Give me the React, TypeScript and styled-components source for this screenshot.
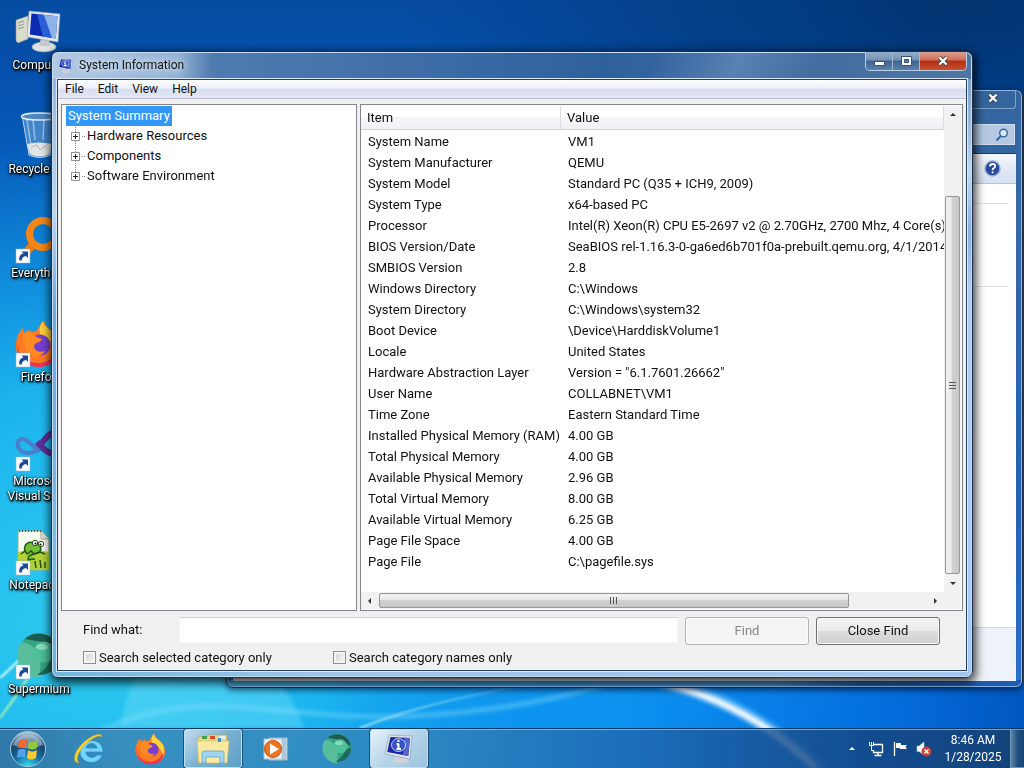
import React from "react";
import styled, { createGlobalStyle, css } from "styled-components";

const GlobalStyle = createGlobalStyle`
  * { box-sizing: border-box; }
  body {
    margin: 0;
    font-family: Roboto, "Open Sans", sans-serif;
    font-size: 13px;
    line-height: 16px;
    color: #111;
    overflow: hidden;
  }
  button, input { font: inherit; color: inherit; }
`;

/* ---------- desktop ---------- */

const Desktop = styled.div`
  position: relative;
  display: flex;
  flex-direction: column;
  min-height: 100vh;
  overflow: hidden;
  isolation: isolate;
`;

const WallpaperArt = styled.svg`
  position: absolute;
  inset: 0;
  width: 100%;
  height: 100%;
  z-index: -1;
`;

const Workspace = styled.main`
  position: relative;
  flex: 1;
`;

const IconColumn = styled.nav`
  display: flex;
  flex-direction: column;
  width: 78px;
  padding-top: 8px;
`;

const DesktopIcon = styled.a`
  display: flex;
  flex-direction: column;
  align-items: center;
  gap: 2px;
  height: 104px;
  color: #fff;
  text-align: center;
  text-decoration: none;
  font-size: 12px;
  line-height: 15px;
  text-shadow: 0 1px 2px #000, 0 0 3px #000, 1px 1px 1px #000, 1px 2px 3px #000;
  &:last-child {
    height: auto;
  }
`;

const IconLabel = styled.span`
  width: 78px;
  white-space: nowrap;
`;

/* ---------- windows ---------- */

const frame = css`
  position: absolute;
  display: flex;
  flex-direction: column;
  border-radius: 7px;
  border: 1px solid #1c2f47;
`;

const ExplorerWindow = styled.section`
  ${frame}
  top: 89px;
  left: 226px;
  right: 1px;
  bottom: 40px;
  padding: 0 6px 6px;
  background:
    linear-gradient(90deg, #3b9ccb, #2f86cb 40%, #3f83b6 68%, #1d57a5 80%, #1f5cb4) 0 100% / 100% 7px no-repeat,
    linear-gradient(#34659f 0, #3568a4 130px, #2262b4 400px, #2c6fc8);
  box-shadow: inset 0 0 0 1px #8cb5e2, 0 2px 6px rgba(0, 10, 40, 0.6);
`;

const ExplorerTitle = styled.header`
  display: flex;
  justify-content: flex-end;
  height: 34px;
`;

const GhostClose = styled.button`
  width: 46px;
  height: 19px;
  padding: 0;
  border: 1px solid #7fa3cc;
  border-top: 0;
  border-radius: 0 0 4px 4px;
  background: transparent;
`;

const ExplorerAddress = styled.div`
  display: flex;
  justify-content: flex-end;
  height: 29px;
  padding-right: 1px;
`;

const ExplorerSearch = styled.div`
  display: flex;
  align-items: center;
  justify-content: flex-end;
  width: 200px;
  height: 21px;
  padding-right: 5px;
  background: #b5cae2;
  border: 1px solid #cfdff0;
`;

const ExplorerTools = styled.div`
  display: flex;
  align-items: center;
  justify-content: flex-end;
  height: 31px;
  padding-right: 15px;
  background: linear-gradient(#f5f9fd, #e0e9f5 50%, #d5e1f2);
  border-top: 1px solid #1d3c63;
  border-bottom: 1px solid #b4c4dc;
`;

const ExplorerBody = styled.div`
  flex: 1;
  background: #fff;
`;

const ExplorerGroup = styled.div<{ $height: number }>`
  height: ${(p) => p.$height}px;
  margin-right: 8px;
  border-bottom: 1px solid #dfe3e8;
`;

const ExplorerDetails = styled.div`
  height: 54px;
  background: #edf3f9;
  border-top: 1px solid #ccd8e6;
`;

const MainWindow = styled.section`
  ${frame}
  top: 51px;
  left: 51px;
  right: 51px;
  bottom: 50px;
  padding: 0 5px 6px;
  background:
    linear-gradient(90deg, rgba(188, 209, 234, 0.9) 0, rgba(160, 188, 220, 0.85) 125px, rgba(70, 120, 180, 0) 160px) 0 0 / 100% 27px no-repeat,
    linear-gradient(115deg, transparent 65%, rgba(180, 205, 235, 0.25) 74%, transparent 83%) 0 0 / 100% 27px no-repeat,
    linear-gradient(90deg, #5f86b2, #4d7aaf 20%, #2f609e 60%, #5076a2) 0 0 / 100% 27px no-repeat,
    linear-gradient(90deg, #72b6dc, #9fc4e8 30%, #a4c6f0) 0 100% / 100% 7px no-repeat,
    linear-gradient(#8fb1d6, #bcd5ef 160px, #73a7de 260px, #78bee4 500px, #68b4d8) 0 0 / 50% 100% no-repeat,
    linear-gradient(#6b8eb8, #c0d6ee 120px, #8aaedc 180px, #b5cbf0 240px, #a6c8f5) 100% 0 / 50% 100% no-repeat;
  box-shadow: inset 0 0 0 1px #c5dcf2, 1px 3px 10px 2px rgba(0, 0, 0, 0.75);
`;

const TitleBar = styled.header`
  display: flex;
  align-items: flex-start;
  height: 27px;
`;

const Title = styled.h1`
  flex: 1;
  display: flex;
  align-items: center;
  gap: 5px;
  margin: 0;
  height: 26px;
  font-size: 12px;
  font-weight: 400;
  text-shadow: 0 0 6px #dce8f5, 0 0 10px #dce8f5;
`;

const Caption = styled.div`
  display: flex;
  height: 19px;
  border: 1px solid #b9cde4;
  border-top: 0;
  border-radius: 0 0 5px 5px;
  overflow: hidden;
`;

const CaptionButton = styled.button<{ $close?: boolean }>`
  display: grid;
  place-items: center;
  width: ${(p) => (p.$close ? 46 : 27)}px;
  padding: 0;
  border: 0;
  border-right: ${(p) => (p.$close ? 0 : 1)}px solid #a3bbd6;
  background: ${(p) =>
    p.$close
      ? "linear-gradient(#dba092, #cf6d58 45%, #b32f14 50%, #c9512d)"
      : "linear-gradient(#93adca, #7492b7 45%, #3e638f 50%, #5b82ae)"};
`;

const Client = styled.div`
  flex: 1;
  display: flex;
  flex-direction: column;
  min-height: 0;
  background: #f0f0f0;
  border: 1px solid #27425f;
  box-shadow: 0 0 0 1px #d7e8f8;
`;

const MenuBar = styled.nav`
  display: flex;
  gap: 2px;
  height: 19px;
  padding-left: 1px;
  background: linear-gradient(#fdfeff, #edf1fa 45%, #d9deef 50%, #e3e6f4);
  border-bottom: 1px solid #b8bccd;
`;

const MenuItem = styled.button`
  padding: 0 6px;
  border: 0;
  background: none;
  font-size: 12px;
  line-height: 18px;
`;

const Panes = styled.div`
  flex: 1;
  display: grid;
  grid-template-columns: 296px minmax(0, 1fr);
  gap: 3px;
  min-height: 0;
  padding: 5px 3px 0;
`;

const pane = css`
  background: #fff;
  border: 1px solid #82858b;
`;

const Tree = styled.ul`
  ${pane}
  margin: 0;
  padding: 1px 4px;
  list-style: none;
`;

const Branches = styled.ul`
  margin: 0 0 0 9px;
  padding: 0;
  list-style: none;
  background: linear-gradient(#fff 50%, #888 50%) 0 0 / 1px 2px repeat-y;
  height: 50px;
`;

const Branch = styled.li`
  display: flex;
  align-items: center;
  height: 20px;
  gap: 2px;
  margin-left: -4px;
`;

const Selected = styled.span`
  display: inline-block;
  padding: 0 2px;
  line-height: 20px;
  color: #fff;
  background: #3397f8;
`;

const Expander = styled.button`
  width: 9px;
  height: 9px;
  padding: 0;
  border: 0;
  background: none;
  display: flex;
`;

const Dots = styled.span`
  width: 3px;
  border-top: 1px dotted #888;
`;

const ListPane = styled.div`
  ${pane}
  display: grid;
  grid-template: minmax(0, 1fr) 17px / minmax(0, 1fr) 17px;
  padding: 1px 1px 1px 0;
`;

const TableClip = styled.div`
  overflow: hidden;
`;

const Table = styled.table`
  width: 100%;
  table-layout: fixed;
  border-collapse: separate;
  border-spacing: 0;
  white-space: nowrap;
`;

const HeadCell = styled.th<{ $width?: number }>`
  width: ${(p) => (p.$width ? `${p.$width}px` : "auto")};
  height: 24px;
  padding: 0 0 0 6px;
  text-align: left;
  font-weight: 400;
  background: linear-gradient(#fff 45%, #f5f6f8 50%, #f1f2f4);
  border-bottom: 1px solid #d5d5d5;
  border-right: 1px solid #dcdfe3;
`;

const HeadSpace = styled.td`
  height: 1px;
  padding: 0;
`;

const Cell = styled.td`
  height: 21px;
  padding: 0 0 0 7px;
  line-height: 20px;
`;

const ScrollTrack = styled.div<{ $vertical?: boolean }>`
  display: flex;
  flex-direction: ${(p) => (p.$vertical ? "column" : "row")};
  background: #f1f1f1;
`;

const ScrollArrow = styled.button`
  display: grid;
  place-items: center;
  flex: 0 0 18px;
  padding: 0;
  border: 0;
  background: none;
`;

const ScrollSpace = styled.div<{ $grow: number }>`
  flex: ${(p) => p.$grow} 1 0;
`;

const Thumb = styled.div<{ $grow: number; $vertical?: boolean }>`
  flex: ${(p) => p.$grow} 1 0;
  display: grid;
  place-items: center;
  margin: ${(p) => (p.$vertical ? "0 1px" : "1px 0")};
  border: 1px solid #969696;
  border-radius: 2px;
  background: linear-gradient(
    ${(p) => (p.$vertical ? "90deg" : "180deg")},
    #f4f4f4, #e6e6e6 45%, #d0d0d0 50%, #c8c8c8
  );
`;

const FindBar = styled.form`
  display: grid;
  grid-template-columns: 96px minmax(0, 1fr) 124px 124px;
  column-gap: 7px;
  padding: 6px 26px 2px 25px;
`;

const FindLabel = styled.label`
  line-height: 26px;
`;

const FindInput = styled.input`
  height: 26px;
  margin-left: -7px;
  padding: 0 6px;
  border: 1px solid #f5f5f5;
  border-top-color: #d2d4d8;
  background: #fff;
`;

const PushButton = styled.button`
  height: 28px;
  border: 1px solid #707070;
  border-radius: 3px;
  background: linear-gradient(#f3f3f3, #ebebeb 48%, #dddddd 50%, #cfcfcf);
  box-shadow: inset 0 0 0 1px #fafafa;
  &:disabled {
    border-color: #b5b5b5;
    background: #f4f4f4;
    color: #868686;
  }
`;

const Options = styled.div`
  grid-column: 1 / -1;
  display: grid;
  grid-template-columns: 250px 1fr;
  padding-top: 3px;
`;

const Option = styled.label`
  display: flex;
  align-items: center;
  gap: 3px;
  height: 20px;
`;

const Check = styled.input`
  appearance: none;
  width: 13px;
  height: 13px;
  margin: 0 0 2px;
  border: 1px solid #8e8f8f;
  background: linear-gradient(135deg, #ccd0d5, #f8f8f8);
  box-shadow: inset 0 0 0 2px #f4f4f4;
`;

/* ---------- taskbar ---------- */

const Taskbar = styled.footer`
  display: flex;
  gap: 4px;
  height: 40px;
  border-top: 1px solid #0b3c6d;
  box-shadow: inset 0 1px 0 rgba(150, 205, 240, 0.7);
  background: linear-gradient(90deg, rgba(50, 108, 155, 0.85), rgba(58, 135, 182, 0.85) 12%, rgba(52, 132, 185, 0.8) 40%, rgba(32, 100, 170, 0.78) 62%, rgba(22, 70, 128, 0.85) 85%, rgba(22, 66, 115, 0.9));
`;

const StartButton = styled.button`
  width: 56px;
  padding: 0;
  border: 0;
  background: none;
  display: grid;
  place-items: center;
`;

const TaskButton = styled.button<{ $state?: "open" | "active" }>`
  display: grid;
  place-items: center;
  width: 58px;
  padding: 0;
  border-radius: 3px;
  border: 1px solid transparent;
  background: none;
  ${(p) =>
    p.$state &&
    css`
      border-color: #bfe0f2;
      box-shadow: 0 0 0 1px rgba(15, 55, 90, 0.7);
      background: ${p.$state === "active"
        ? "linear-gradient(135deg, #e6f2fa, #b5d4e8 50%, #9cc4de)"
        : "linear-gradient(135deg, #c3dcec, #79b1d2 50%, #5ba0c8)"};
    `}
`;

const Tray = styled.div`
  display: flex;
  align-items: center;
  margin-left: auto;
  color: #fff;
`;

const TrayButton = styled.button`
  display: grid;
  place-items: center;
  width: 24px;
  height: 24px;
  padding: 0;
  border: 0;
  background: none;
`;

const Clock = styled.time`
  width: 74px;
  text-align: center;
  font-size: 12px;
  line-height: 17px;
`;

const ShowDesktop = styled.button`
  align-self: stretch;
  width: 14px;
  padding: 0;
  border: 1px solid #6f94b5;
  border-right: 0;
  background: linear-gradient(90deg, #5f86a8, #21507f 50%, #1a4370);
`;

/* ---------- drawings ---------- */

const Wallpaper = () => (
  <WallpaperArt viewBox="0 0 1024 768" preserveAspectRatio="none" aria-hidden="true">
    <defs>
      <linearGradient id="sky" x1="0" y1="0" x2="0" y2="1">
        <stop offset="0" stopColor="#064ca2" />
        <stop offset=".12" stopColor="#0552b0" />
        <stop offset=".4" stopColor="#0a78d0" />
        <stop offset=".7" stopColor="#0f98ea" />
        <stop offset="1" stopColor="#0c92f2" />
      </linearGradient>
      <radialGradient id="cyan" gradientUnits="userSpaceOnUse" cx="90" cy="620" r="480">
        <stop offset="0" stopColor="#2fccee" />
        <stop offset=".5" stopColor="#1ebaf0" stopOpacity=".85" />
        <stop offset="1" stopColor="#1296e8" stopOpacity="0" />
      </radialGradient>
      <linearGradient id="shade" x1="0" x2="1">
        <stop offset=".6" stopColor="#0064e0" stopOpacity="0" />
        <stop offset=".85" stopColor="#0060d8" stopOpacity=".7" />
        <stop offset="1" stopColor="#0050b8" stopOpacity=".9" />
      </linearGradient>
      <radialGradient id="top" gradientUnits="userSpaceOnUse" cx="960" cy="0" r="560" gradientTransform="translate(0 0) scale(1 .5)">
        <stop offset="0" stopColor="#02346f" />
        <stop offset=".5" stopColor="#033b80" stopOpacity=".8" />
        <stop offset="1" stopColor="#00408c" stopOpacity="0" />
      </radialGradient>
      <linearGradient id="ray" x1="0" y1="1" x2="1" y2="0">
        <stop offset="0" stopColor="#d8ffff" />
        <stop offset="1" stopColor="#b0e8ff" stopOpacity=".3" />
      </linearGradient>
      <filter id="soft" x="-20%" y="-20%" width="140%" height="140%">
        <feGaussianBlur stdDeviation="2" />
      </filter>
      <filter id="fine" x="-20%" y="-20%" width="140%" height="140%">
        <feGaussianBlur stdDeviation="1" />
      </filter>
    </defs>
    <rect width="1024" height="768" fill="url(#sky)" />
    <rect width="1024" height="768" fill="url(#cyan)" />
    <rect width="1024" height="768" fill="url(#shade)" />
    <rect width="1024" height="768" fill="url(#top)" />
    <g filter="url(#soft)" fill="none">
      <path d="M560 664C660 670 750 700 822 772" stroke="#6fd0ff" strokeWidth="13" opacity=".55" />
      <path d="M560 668C660 674 745 698 815 768" stroke="#fff" strokeWidth="6" />
      <path d="M120 728C130 670 150 640 200 640C260 640 290 690 304 728Z" fill="#7ae6fa" opacity=".35" />
      <path d="M100 732C170 696 230 706 300 712C400 724 520 712 620 680" stroke="#8ce4ff" strokeWidth="4" opacity=".5" />
    </g>
    <g filter="url(#fine)" fill="none">
      <path d="M0 718Q26 684 50 640" stroke="#b6f8a4" strokeWidth="2" />
      <path d="M0 678Q20 660 40 640" stroke="#d8ffff" strokeWidth="2" />
      <path d="M360 728Q420 704 520 686" stroke="url(#ray)" strokeWidth="2" opacity=".7" />
    </g>
  </WallpaperArt>
);

const Shortcut = () => (
  <g>
    <path d="M1 33H15V47H1Z" fill="#f8fbff" stroke="#9fb3cc" strokeWidth=".5" />
    <path d="M4.500 44.500C3.500 40.500 5.500 38 8.500 37.500L6.500 35.500H13V42L11 40C8.500 40.500 6.500 41.800 6.800 44.500Z" fill="#1d4a92" />
  </g>
);

const ComputerArt = () => (
  <svg width="48" height="48" viewBox="0 0 48 48" aria-hidden="true">
    <path d="M1 12L13 8V31L3 35L1 33Z" fill="#d9dccb" stroke="#8b938c" strokeWidth=".6" />
    <path d="M3 15L9 13M3 18L9 16M3 21L9 19" stroke="#8d9890" />
    <ellipse cx="29" cy="39" rx="12" ry="5" fill="#dfe3e2" stroke="#9aa2a6" strokeWidth=".6" />
    <path d="M26 30H34L35 38H24Z" fill="#c3c8ca" />
    <path d="M14 3L45 6L43 34L12 29Z" fill="#e3e7ea" stroke="#9aa4ac" strokeWidth=".6" />
    <path d="M16.500 5.500L42.500 8.300L40.800 30.500L14.800 26.500Z" fill="#0c2bb0" />
    <path d="M28 6.800L42.500 8.300L40.800 30.500L36 29.700Z" fill="#8db4ea" />
    <path d="M22 6L29 7L37 30L28 28.500Z" fill="#2b5fd8" />
  </svg>
);

const BinArt = () => (
  <svg width="48" height="48" viewBox="0 0 48 48" aria-hidden="true">
    <path d="M7 3H42L36 43Q24 48 14 43Z" fill="#7fb2dc" fillOpacity=".5" stroke="#b9d7ee" />
    <path d="M12 32Q24 29 37 32L35 42Q24 47 15 42Z" fill="#e3e6e4" />
    <path d="M15 36L22 33L25 38L32 33" stroke="#aeb6b8" fill="none" />
    <path d="M12 8L17 40M18 8L20 28M29 8L28 28" stroke="#cfe4f5" strokeWidth="1.500" opacity=".6" />
    <ellipse cx="24.500" cy="4.500" rx="18" ry="3.500" fill="#4f86bd" stroke="#d9eaf6" strokeWidth="1.500" />
  </svg>
);

const EverythingArt = () => (
  <svg width="48" height="48" viewBox="0 0 48 48" aria-hidden="true">
    <path d="M17 30L12 35" stroke="#f07c10" strokeWidth="8" />
    <circle cx="28" cy="18" r="13.500" fill="none" stroke="#f58515" strokeWidth="7" />
    <Shortcut />
  </svg>
);

const FirefoxShape = () => (
  <g>
    <path d="M2 18C3 13 5 11 8 8L9 13L14 10Q16 12 20 12C23 10 25 4 29 0C30 7 37 10 42 17C47 26 46 36 38 42C30 48 17 48 9 42C1 36 -1 26 2 18Z" fill="#ff7a20" />
    <path d="M28 1C29 8 38 10 42 18C45 25 44 33 40 38C42 27 36 20 25 14Q23 8 28 1Z" fill="#ffcf3c" />
    <path d="M2 20C1 34 12 44 25 43C34 42 40 36 41 29C45 38 36 47 24 47C9 47 0 35 2 20Z" fill="#ee3458" />
    <circle cx="25" cy="25" r="10.500" fill="#7740d2" />
    <path d="M8 14C12 11 18 12 21 17L27 19C25 23 20 22 19 26C19 31 25 33 30 31C28 37 15 38 11 30C9 25 7 20 8 14Z" fill="#ff8a22" />
  </g>
);

const FirefoxArt = ({ size, shortcut }: { size: number; shortcut?: boolean }) => (
  <svg width={size} height={size} viewBox="0 0 48 48" aria-hidden="true">
    <FirefoxShape />
    {shortcut && <Shortcut />}
  </svg>
);

const VisualStudioArt = () => (
  <svg width="48" height="48" viewBox="0 0 48 48" aria-hidden="true">
    <path d="M22 26C28 18 33 8 42 8C52 10 48 32 38 30C32 29 28 24 22 18" fill="none" stroke="#5a2f96" strokeWidth="6" />
    <path d="M24 24C20 28 14 30 8 28C0 24 2 14 8 15C14 16 18 22 24 28" fill="none" stroke="#4b7fce" strokeWidth="4" />
    <Shortcut />
  </svg>
);

const NotepadArt = () => (
  <svg width="48" height="48" viewBox="0 0 48 48" aria-hidden="true">
    <path d="M3 3H26L34 11V42H3Z" fill="#f7faf0" stroke="#9fae8c" />
    <path d="M3 24Q16 20 34 24V42H3Z" fill="#b2d23a" />
    <path d="M26 3V11H34" fill="#dfe6d8" stroke="#9fae8c" />
    <path d="M4 3H26" stroke="#555" strokeWidth="2" strokeDasharray="1 2" />
    <path d="M10 23C8 16 14 13 19 15C26 16 28 22 23 25C18 27 12 26 13 32L20 31" fill="#75bd34" stroke="#235c18" strokeWidth="1.500" />
    <circle cx="20" cy="15" r="2.700" fill="#fff" stroke="#234d18" />
    <circle cx="26" cy="16" r="2.700" fill="#fff" stroke="#234d18" />
    <circle cx="20.500" cy="15.500" r="1" /><circle cx="25.500" cy="16.500" r="1" />
    <path d="M6 26L10 23L12 26L16 23L19 26L25 24L30 26M20 33L21 40M25 32L26 40M30 34V40" stroke="#254f1c" strokeWidth="1.500" fill="none" />
    <Shortcut />
  </svg>
);

const SupermiumArt = ({ size, shortcut }: { size: number; shortcut?: boolean }) => (
  <svg width={size} height={size} viewBox="0 0 48 48" aria-hidden="true">
    <circle cx="24" cy="22" r="21" fill="#35a384" />
    <path d="M10 7C20 -3 42 1 45 20L28 10Z" fill="#1b5b50" />
    <path d="M5 12C9 8 17 12 22 20C27 27 25 35 24 46C6 44 -3 26 5 12Z" fill="#58bd9b" />
    <path d="M45 22C45 36 34 44 22 43Q33 36 37 25Z" fill="#1d6a58" />
    <circle cx="29" cy="20" r="10.500" fill="#4cc09a" />
    <ellipse cx="27" cy="15" rx="6" ry="3" fill="#a5e8ce" opacity=".7" />
    {shortcut && <Shortcut />}
  </svg>
);

const SysInfoArt = ({ size }: { size: number }) => (
  <svg width={size} height={size} viewBox="0 0 32 32" aria-hidden="true">
    <path d="M15 22H22L26 28Q18 33 9 28Z" fill="#cdd3d8" />
    <path d="M6 2L29 3L27 26L2 21Z" fill="#dfe5ee" stroke="#8796ad" strokeWidth=".6" />
    <path d="M7.500 4L27 5L25.200 23L4.200 19Z" fill="#1a27a0" />
    <path d="M21 4.700L27 5L25.200 23L20 22Z" fill="#5167cd" />
    <ellipse cx="15.500" cy="12" rx="7" ry="6.500" fill="#3551c8" stroke="#c8d5f8" />
    <path d="M15.500 10.500V16M13.500 16H18M13.500 11H15.500M15.500 7V9" stroke="#fff" strokeWidth="2" />
  </svg>
);

const StartArt = () => (
  <svg width="38" height="38" viewBox="0 0 38 38" aria-hidden="true">
    <defs>
      <radialGradient id="orb" cx=".5" cy="1" r=".95">
        <stop offset="0" stopColor="#38e0f4" />
        <stop offset=".4" stopColor="#1670a6" />
        <stop offset=".75" stopColor="#174269" />
        <stop offset="1" stopColor="#a3bed3" />
      </radialGradient>
    </defs>
    <circle cx="19" cy="19" r="17.500" fill="url(#orb)" stroke="#a8c8dd" />
    <path d="M4 15A16 16 0 0 1 34 15Q19 22 4 15Z" fill="#d2e2ee" opacity=".45" />
    <path d="M10 11Q14 8 18 10L17 18Q13 16 9 18Z" fill="#ee6830" />
    <path d="M20 11Q24 13 29 10L28 18Q23 21 19 18Z" fill="#92c83e" />
    <path d="M9 20Q13 18 17 20L16 28Q12 26 8 28Z" fill="#51a3e8" />
    <path d="M19 20Q23 23 28 20L27 28Q22 31 18 28Z" fill="#fbc930" />
  </svg>
);

const IeArt = () => (
  <svg width="32" height="32" viewBox="0 0 32 32" aria-hidden="true">
    <path d="M30 19H13C13 25 21 26 24 22H29C26 33 7 32 7 18C7 5 30 3 30 19ZM13 15H24C23 9 14 9 13 15Z" fill="#75d3fa" stroke="#258bcb" strokeWidth=".7" />
    <path d="M6 30C-3 29 3 16 11 9C18 3 29 -2 29 4C26 1 18 6 13 11C6 17 2 26 6 30Z" fill="#f8d32c" stroke="#cf9d12" strokeWidth=".5" />
  </svg>
);

const FolderArt = () => (
  <svg width="34" height="32" viewBox="0 0 34 32" aria-hidden="true">
    <path d="M2 4H11L13 2H31V29H2Z" fill="#eed98a" stroke="#c5a748" strokeWidth=".7" />
    <path d="M6 3H11V6H6Z" fill="#44a048" /><path d="M14 3H19V6H14Z" fill="#d74a36" /><path d="M23 3H29V6H23Z" fill="#e8f0f4" />
    <path d="M1 8H33L31 30H3Z" fill="#f9eaa2" stroke="#d8bd60" strokeWidth=".7" />
    <path d="M22 5H25V9H22Z" fill="#3b8fd0" />
    <path d="M6 30V20Q6 18 8 18H26Q28 18 28 20V30H24V24H10V30Z" fill="#9ed5f0" stroke="#569ec8" strokeWidth=".7" />
  </svg>
);

const MediaArt = () => (
  <svg width="28" height="26" viewBox="0 0 28 26" aria-hidden="true">
    <path d="M8 2H26V24H8Z" fill="#dceaf3" stroke="#a5bfd0" />
    <path d="M24 2V24M22 2V24" stroke="#7fa9c4" />
    <path d="M3 3H21V23H3Z" fill="#f5f7f8" stroke="#aec0cb" />
    <circle cx="12" cy="13" r="8.500" fill="#ee7622" stroke="#c4541a" />
    <path d="M9 7.500L18 13L9 18.500Z" fill="#fff" />
  </svg>
);

const Cross = () => (
  <svg width="12" height="10" viewBox="0 0 12 10" aria-hidden="true">
    <path d="M2.500 1.500L9.500 8.500M9.500 1.500L2.500 8.500" stroke="#3d3f4d" strokeWidth="4" />
    <path d="M2.500 1.500L9.500 8.500M9.500 1.500L2.500 8.500" stroke="#fff" strokeWidth="2.400" />
  </svg>
);

const MinimizeArt = () => (
  <svg width="13" height="10" viewBox="0 0 13 10" aria-hidden="true">
    <path d="M1.500 5.500H11.500V9.500H1.500Z" fill="#fff" stroke="#3b5372" />
  </svg>
);

const MaximizeArt = () => (
  <svg width="13" height="10" viewBox="0 0 13 10" aria-hidden="true">
    <path d="M1.500 .5H11.500V9.500H1.500Z" fill="#fff" stroke="#3b5372" />
    <path d="M4.500 3.500H8.500V6.500H4.500Z" fill="#5c7ea8" stroke="#3b5372" />
  </svg>
);

const PlusBox = () => (
  <svg width="9" height="9" viewBox="0 0 9 9" aria-hidden="true">
    <path d="M.5 .5H8.500V8.500H.5Z" fill="#fff" stroke="#919191" />
    <path d="M2 4.500H7M4.500 2V7" stroke="#222" />
  </svg>
);

const arrowPaths = {
  up: "M1 5L4 2L7 5Z",
  down: "M1 3L4 6L7 3Z",
  left: "M5 1L2 4L5 7Z",
  right: "M3 1L6 4L3 7Z",
};

const Arrow = ({ to, color = "#333" }: { to: keyof typeof arrowPaths; color?: string }) => (
  <svg width="8" height="8" viewBox="0 0 8 8" aria-hidden="true">
    <path d={arrowPaths[to]} fill={color} />
  </svg>
);

const Grip = ({ vertical }: { vertical?: boolean }) => (
  <svg width="8" height="8" viewBox="0 0 8 8" aria-hidden="true">
    <path d={vertical ? "M0 1.500H7M0 4.500H7M0 7.500H7" : "M.5 0V7M3.500 0V7M6.500 0V7"} stroke="#555" />
  </svg>
);

const SearchArt = () => (
  <svg width="14" height="14" viewBox="0 0 14 14" aria-hidden="true">
    <circle cx="8.500" cy="5" r="3.800" fill="#dbe9f7" stroke="#3566a5" strokeWidth="1.400" />
    <path d="M5.800 8L1.500 12.500" stroke="#3566a5" strokeWidth="2" />
  </svg>
);

const HelpArt = () => (
  <svg width="17" height="17" viewBox="0 0 17 17" aria-hidden="true">
    <circle cx="8.500" cy="8.500" r="7.500" fill="#27499c" stroke="#9aaccf" strokeWidth="1.500" />
    <path d="M6 6.500Q6 4 8.600 4Q11.200 4 11.200 6.200Q11.200 7.500 9.500 8.300Q8.600 8.800 8.600 10.200" fill="none" stroke="#fff" strokeWidth="1.800" />
    <path d="M7.700 11.500H9.600V13.300H7.700Z" fill="#fff" />
  </svg>
);

const NetworkArt = () => (
  <svg width="16" height="16" viewBox="0 0 16 16" fill="none" stroke="#fff" aria-hidden="true">
    <path d="M6 3.500H14.500V11.500H5.500V9M10 12V14M6.500 14.500H13.500" strokeWidth="1.300" />
    <path d="M1.500 1V4.500H5.500V1M3.500 1V9.500H6" />
  </svg>
);

const FlagArt = () => (
  <svg width="16" height="16" viewBox="0 0 16 16" aria-hidden="true">
    <path d="M2.500 1V15" stroke="#fff" strokeWidth="1.300" />
    <path d="M4 2H9V4H15L13.500 6L15 8H8V7H4Z" fill="#fff" />
  </svg>
);

const VolumeArt = () => (
  <svg width="16" height="16" viewBox="0 0 16 16" aria-hidden="true">
    <path d="M1 5H3L8 1V14L3 10.500H1Z" fill="#fff" stroke="#acc" strokeWidth=".5" />
    <circle cx="10.500" cy="10.500" r="5" fill="#d23b30" />
    <path d="M8.500 8.500L12.500 12.500M12.500 8.500L8.500 12.500" stroke="#fff" strokeWidth="1.600" />
  </svg>
);

/* ---------- content ---------- */

const desktopIcons = [
  { label: ["Computer"], art: <ComputerArt /> },
  { label: ["Recycle Bin"], art: <BinArt /> },
  { label: ["Everything"], art: <EverythingArt /> },
  { label: ["Firefox"], art: <FirefoxArt size={48} shortcut /> },
  { label: ["Microsoft", "Visual Stu..."], art: <VisualStudioArt /> },
  { label: ["Notepad++"], art: <NotepadArt /> },
  { label: ["Supermium"], art: <SupermiumArt size={48} shortcut /> },
];

const rows = [
  ["System Name", "VM1"],
  ["System Manufacturer", "QEMU"],
  ["System Model", "Standard PC (Q35 + ICH9, 2009)"],
  ["System Type", "x64-based PC"],
  ["Processor", "Intel(R) Xeon(R) CPU E5-2697 v2 @ 2.70GHz, 2700 Mhz, 4 Core(s)"],
  ["BIOS Version/Date", "SeaBIOS rel-1.16.3-0-ga6ed6b701f0a-prebuilt.qemu.org, 4/1/2014"],
  ["SMBIOS Version", "2.8"],
  ["Windows Directory", "C:\\Windows"],
  ["System Directory", "C:\\Windows\\system32"],
  ["Boot Device", "\\Device\\HarddiskVolume1"],
  ["Locale", "United States"],
  ["Hardware Abstraction Layer", "Version = \"6.1.7601.26662\""],
  ["User Name", "COLLABNET\\VM1"],
  ["Time Zone", "Eastern Standard Time"],
  ["Installed Physical Memory (RAM)", "4.00 GB"],
  ["Total Physical Memory", "4.00 GB"],
  ["Available Physical Memory", "2.96 GB"],
  ["Total Virtual Memory", "8.00 GB"],
  ["Available Virtual Memory", "6.25 GB"],
  ["Page File Space", "4.00 GB"],
  ["Page File", "C:\\pagefile.sys"],
];

export default function App() {
  return (
    <>
      <GlobalStyle />
      <Desktop>
        <Wallpaper />
        <Workspace>
          <IconColumn aria-label="Desktop">
            {desktopIcons.map((icon) => (
              <DesktopIcon href="#" key={icon.label[0]}>
                {icon.art}
                <IconLabel>
                  {icon.label.map((line) => (
                    <div key={line}>{line}</div>
                  ))}
                </IconLabel>
              </DesktopIcon>
            ))}
          </IconColumn>

          <ExplorerWindow aria-label="Explorer">
            <ExplorerTitle>
              <GhostClose aria-label="Close"><Cross /></GhostClose>
            </ExplorerTitle>
            <ExplorerAddress>
              <ExplorerSearch><SearchArt /></ExplorerSearch>
            </ExplorerAddress>
            <ExplorerTools><HelpArt /></ExplorerTools>
            <ExplorerBody>
              <ExplorerGroup $height={20} />
              <ExplorerGroup $height={83} />
            </ExplorerBody>
            <ExplorerDetails />
          </ExplorerWindow>

          <MainWindow aria-label="System Information">
            <TitleBar>
              <Title><SysInfoArt size={17} />System Information</Title>
              <Caption>
                <CaptionButton aria-label="Minimize"><MinimizeArt /></CaptionButton>
                <CaptionButton aria-label="Maximize"><MaximizeArt /></CaptionButton>
                <CaptionButton aria-label="Close" $close><Cross /></CaptionButton>
              </Caption>
            </TitleBar>
            <Client>
              <MenuBar>
                {["File", "Edit", "View", "Help"].map((m) => (
                  <MenuItem key={m}>{m}</MenuItem>
                ))}
              </MenuBar>
              <Panes>
                <Tree>
                  <li>
                    <Selected>System Summary</Selected>
                    <Branches>
                      {["Hardware Resources", "Components", "Software Environment"].map((b) => (
                        <Branch key={b}>
                          <Expander aria-label={`Expand ${b}`}><PlusBox /></Expander>
                          <Dots />
                          {b}
                        </Branch>
                      ))}
                    </Branches>
                  </li>
                </Tree>
                <ListPane>
                  <TableClip>
                    <Table>
                      <thead>
                        <tr>
                          <HeadCell scope="col" $width={200}>Item</HeadCell>
                          <HeadCell scope="col">Value</HeadCell>
                        </tr>
                        <tr><HeadSpace colSpan={2} /></tr>
                      </thead>
                      <tbody>
                        {rows.map(([item, value]) => (
                          <tr key={item}>
                            <Cell>{item}</Cell>
                            <Cell>{value}</Cell>
                          </tr>
                        ))}
                      </tbody>
                    </Table>
                  </TableClip>
                  <ScrollTrack $vertical>
                    <ScrollArrow aria-label="Scroll up"><Arrow to="up" /></ScrollArrow>
                    <ScrollSpace $grow={72} />
                    <Thumb $grow={378} $vertical><Grip vertical /></Thumb>
                    <ScrollArrow aria-label="Scroll down"><Arrow to="down" /></ScrollArrow>
                  </ScrollTrack>
                  <ScrollTrack>
                    <ScrollArrow aria-label="Scroll left"><Arrow to="left" /></ScrollArrow>
                    <Thumb $grow={470}><Grip /></Thumb>
                    <ScrollSpace $grow={77} />
                    <ScrollArrow aria-label="Scroll right"><Arrow to="right" /></ScrollArrow>
                  </ScrollTrack>
                  <ScrollTrack />
                </ListPane>
              </Panes>
              <FindBar onSubmit={(e) => e.preventDefault()}>
                <FindLabel htmlFor="find">Find what:</FindLabel>
                <FindInput id="find" type="text" />
                <PushButton type="submit" disabled>Find</PushButton>
                <PushButton type="button">Close Find</PushButton>
                <Options>
                  <Option><Check type="checkbox" />Search selected category only</Option>
                  <Option><Check type="checkbox" />Search category names only</Option>
                </Options>
              </FindBar>
            </Client>
          </MainWindow>
        </Workspace>

        <Taskbar>
          <StartButton aria-label="Start"><StartArt /></StartButton>
          <TaskButton aria-label="Internet Explorer"><IeArt /></TaskButton>
          <TaskButton aria-label="Firefox"><FirefoxArt size={32} /></TaskButton>
          <TaskButton aria-label="Windows Explorer" $state="open"><FolderArt /></TaskButton>
          <TaskButton aria-label="Media Player"><MediaArt /></TaskButton>
          <TaskButton aria-label="Supermium"><SupermiumArt size={32} /></TaskButton>
          <TaskButton aria-label="System Information" $state="active"><SysInfoArt size={32} /></TaskButton>
          <Tray>
            <TrayButton aria-label="Show hidden icons"><Arrow to="up" color="#fff" /></TrayButton>
            <TrayButton aria-label="Network"><NetworkArt /></TrayButton>
            <TrayButton aria-label="Action Center"><FlagArt /></TrayButton>
            <TrayButton aria-label="Volume muted"><VolumeArt /></TrayButton>
            <Clock>8:46 AM<br />1/28/2025</Clock>
            <ShowDesktop aria-label="Show desktop" />
          </Tray>
        </Taskbar>
      </Desktop>
    </>
  );
}
